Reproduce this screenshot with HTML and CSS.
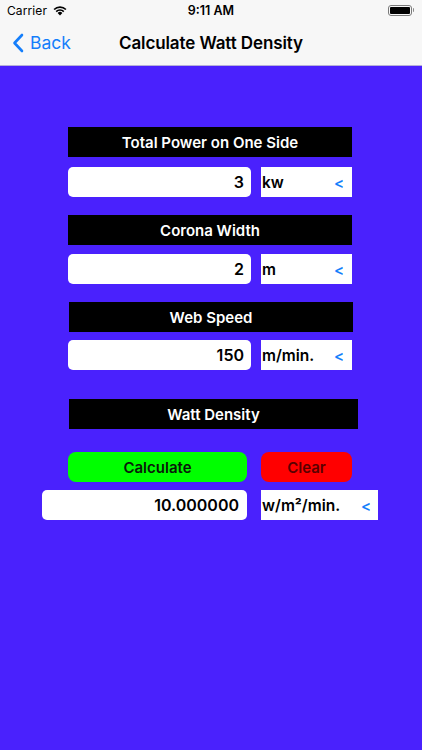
FILE: index.html
```
<!DOCTYPE html>
<html lang="en">
<head>
  <meta charset="UTF-8" />
  <meta name="viewport" content="width=device-width, initial-scale=1.0"/>
  <title>Calculate Watt Density</title>
  <link rel="stylesheet" href="styles.css">
</head>
<body>
  <header class="top">
    <div class="status-bar">
      <div class="carrier">
        Carrier
        <svg class="wifi" width="14" height="11" viewBox="0 0 14 11">
          <path d="M7 10.5 L4.6 8 A3.4 3.4 0 0 1 9.4 8 Z" fill="#000"/>
          <path d="M2.6 6 A6.2 6.2 0 0 1 11.4 6 L10.2 7.2 A4.5 4.5 0 0 0 3.8 7.2 Z" fill="#000"/>
          <path d="M0.5 3.9 A9.2 9.2 0 0 1 13.5 3.9 L12.3 5.1 A7.5 7.5 0 0 0 1.7 5.1 Z" fill="#000"/>
        </svg>
      </div>
      <div class="clock">9:11 AM</div>
      <div class="battery">
        <span class="battery-body"><span class="battery-fill"></span></span>
        <span class="battery-tip"></span>
      </div>
    </div>
    <nav class="nav-bar">
      <a class="back">
        <svg width="12" height="20" viewBox="0 0 12 20">
          <path d="M10 2 L2.5 10 L10 18" fill="none" stroke="#147efb" stroke-width="2.6" stroke-linecap="round" stroke-linejoin="round"/>
        </svg>
        Back
      </a>
      <h1>Calculate Watt Density</h1>
    </nav>
  </header>

  <main class="calc">
    <div class="label first">Total Power on One Side</div>
    <div class="field-row">
      <div class="value">3</div>
      <div class="unit">kw <span class="chev">&lt;</span></div>
    </div>

    <div class="label">Corona Width</div>
    <div class="field-row tight">
      <div class="value">2</div>
      <div class="unit">m <span class="chev">&lt;</span></div>
    </div>

    <div class="label shift">Web Speed</div>
    <div class="field-row tighter">
      <div class="value">150</div>
      <div class="unit">m/min. <span class="chev">&lt;</span></div>
    </div>

    <div class="label result-label">Watt Density</div>
    <div class="buttons">
      <button class="btn calculate">Calculate</button>
      <button class="btn clear">Clear</button>
    </div>
    <div class="field-row result-row">
      <div class="value">10.000000</div>
      <div class="unit">w/m²/min. <span class="chev">&lt;</span></div>
    </div>
  </main>
</body>
</html>
```

FILE: styles.css
```
* {
  box-sizing: border-box;
  margin: 0;
  padding: 0;
}

body {
  width: 422px;
  height: 750px;
  font-family: Inter, "Liberation Sans", sans-serif;
  background: #4a21fd;
  color: #000;
  overflow: hidden;
}

.top {
  background: #f7f7f7;
  border-bottom: 1px solid #b6b0d8;
}

.status-bar {
  height: 20px;
  display: flex;
  align-items: center;
  justify-content: space-between;
  padding: 0 8px 0 7px;
  font-size: 12px;
  position: relative;
}

.carrier {
  display: flex;
  align-items: center;
  gap: 6px;
  letter-spacing: 0.1px;
}

.clock {
  font-weight: 600;
  font-size: 12.5px;
  position: absolute;
  left: 0;
  right: 0;
  text-align: center;
  pointer-events: none;
}

.battery {
  display: flex;
  align-items: center;
}

.battery-body {
  width: 24px;
  height: 11px;
  border: 1px solid #7a7a7a;
  border-radius: 3px;
  padding: 1px;
  display: flex;
}

.battery-fill {
  flex: 1;
  background: #000;
  border-radius: 1px;
}

.battery-tip {
  width: 1.5px;
  height: 4px;
  background: #8a8a8a;
  margin-left: 1px;
  border-radius: 0 1px 1px 0;
}

.nav-bar {
  height: 45px;
  display: flex;
  align-items: center;
  justify-content: center;
  position: relative;
}

.back {
  position: absolute;
  left: 12px;
  top: 12px;
  display: flex;
  align-items: center;
  gap: 6px;
  color: #147efb;
  font-size: 17.5px;
}

.nav-bar h1 {
  font-size: 17px;
  font-weight: 600;
  letter-spacing: -0.1px;
}

.calc {
  display: flex;
  flex-direction: column;
  padding-top: 61px;
}

.label {
  background: #000;
  color: #fff;
  width: 284px;
  height: 30px;
  margin: 18px 0 0 68px;
  display: flex;
  align-items: center;
  justify-content: center;
  font-size: 15px;
  font-weight: 600;
}

.label.first {
  margin-top: 0;
}

.label.shift {
  margin-left: 69px;
}

.label.result-label {
  width: 289px;
  margin: 29px 0 0 69px;
}

.field-row {
  display: flex;
  gap: 10px;
  margin: 10px 0 0 68px;
  height: 30px;
}

.field-row.tight {
  margin-top: 9px;
}

.field-row.tighter {
  margin-top: 8px;
}

.value {
  width: 183px;
  background: #fff;
  border-radius: 5px;
  display: flex;
  align-items: center;
  justify-content: flex-end;
  padding-right: 7px;
  font-size: 16px;
  font-weight: 600;
}

.unit {
  width: 91px;
  background: #fff;
  display: flex;
  align-items: center;
  justify-content: space-between;
  padding: 0 8px 0 1px;
  font-size: 15.5px;
  font-weight: 600;
}

.chev {
  color: #147efb;
  font-size: 15px;
  font-weight: 600;
}

.buttons {
  display: flex;
  gap: 14px;
  margin: 23px 0 0 68px;
}

.btn {
  height: 30px;
  border: none;
  border-radius: 8px;
  font-family: inherit;
  font-size: 15px;
  font-weight: 600;
}

.calculate {
  width: 179px;
  background: #00ff00;
  color: #0a1a0a;
}

.clear {
  width: 91px;
  background: #ff0000;
  color: #5a0000;
}

.result-row {
  margin: 8px 0 0 42px;
  gap: 14px;
}

.result-row .value {
  width: 205px;
  padding-right: 8px;
  font-size: 16px;
}

.result-row .unit {
  width: 117px;
  padding-right: 7px;
}
```
